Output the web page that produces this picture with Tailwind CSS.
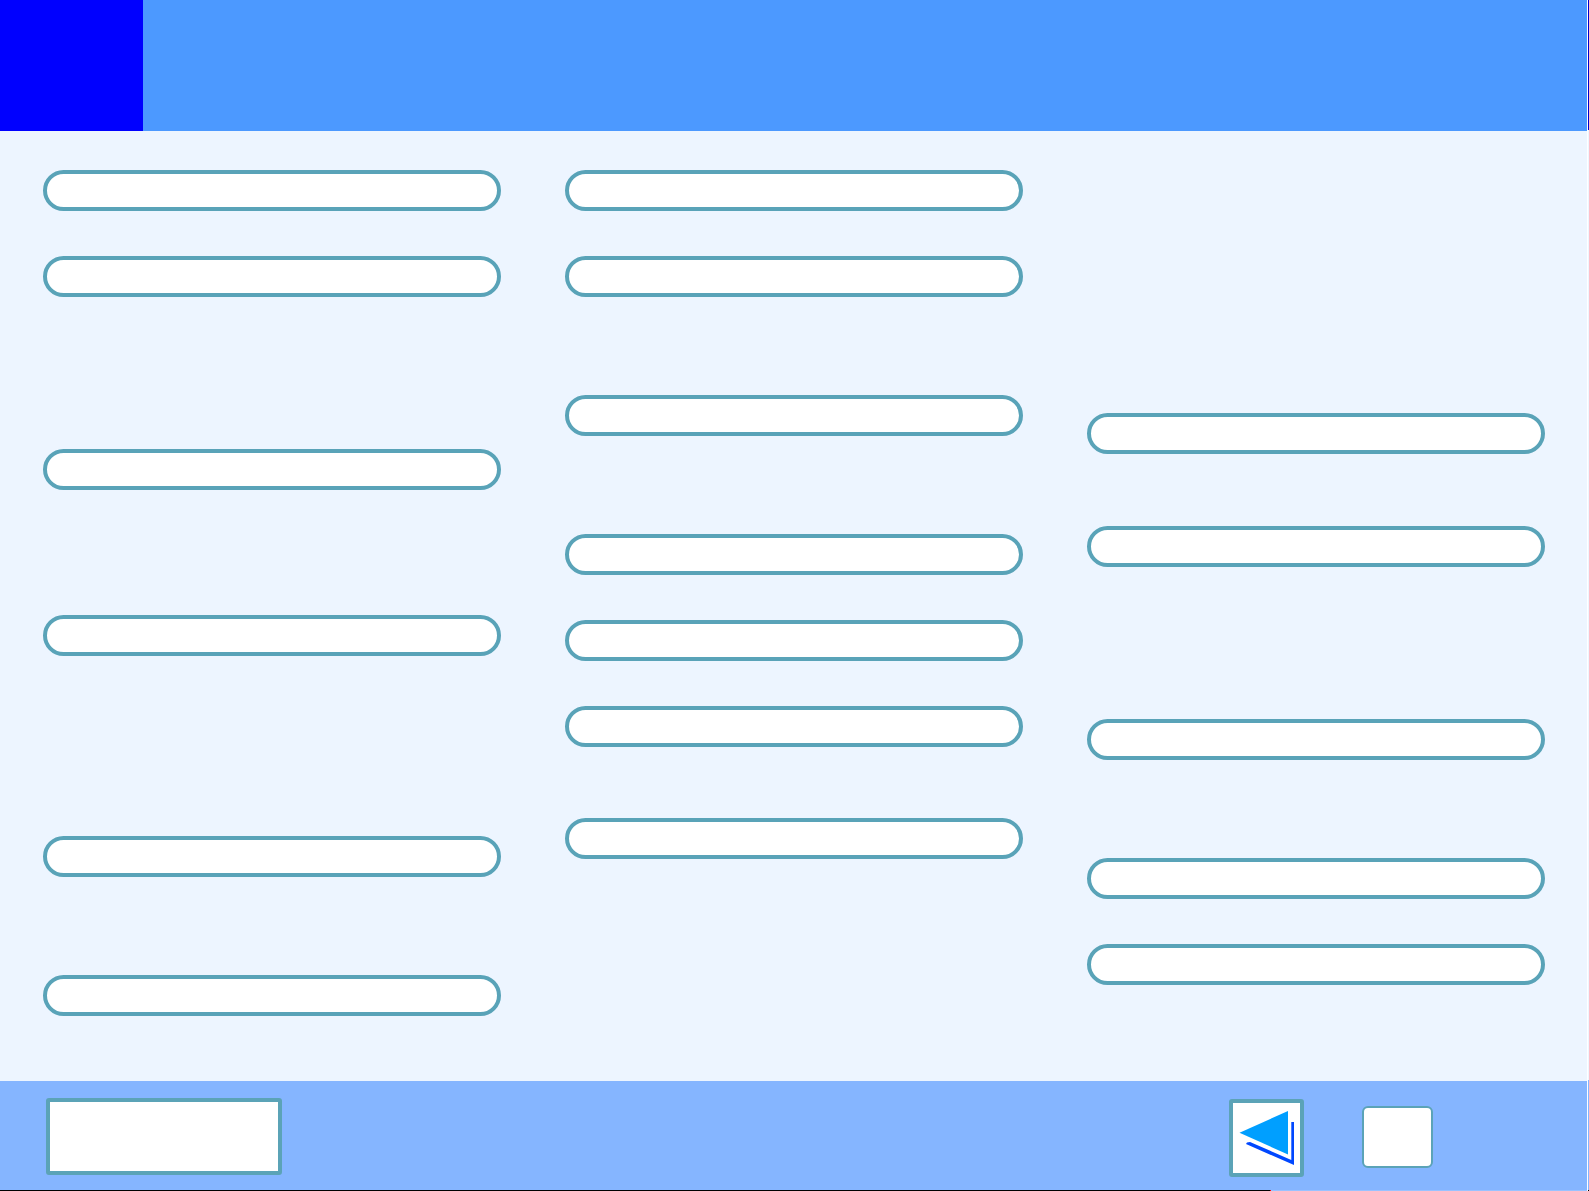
<!DOCTYPE html>
<html lang="en">
<head>
    <meta charset="UTF-8">
    <meta name="viewport" content="width=device-width, initial-scale=1.0">
    <title>Menu</title>
    <script src="https://cdn.jsdelivr.net/npm/@tailwindcss/browser@4"></script>
</head>
<body class="min-h-screen flex bg-white font-['Liberation_Sans',sans-serif]">
    <div class="flex-1 min-h-screen flex flex-col bg-[#edf5ff]">
        <header class="flex h-[131px] bg-[#4c99ff]">
            <div class="w-[143px] bg-[#0000ff]"></div>
        </header>

        <!-- Three columns of menu entries -->
        <main class="flex-1 grid grid-cols-3 gap-x-16 content-start pt-[39px] pl-[43px] pr-[42px]">
            <nav aria-label="Left column">
                <a href="#" class="block h-[41px] rounded-full border-4 border-[#59a3b8] bg-white"></a>
                <a href="#" class="block h-[41px] mt-[45px] rounded-full border-4 border-[#59a3b8] bg-white"></a>
                <a href="#" class="block h-[41px] mt-[152px] rounded-full border-4 border-[#59a3b8] bg-white"></a>
                <a href="#" class="block h-[41px] mt-[125px] rounded-full border-4 border-[#59a3b8] bg-white"></a>
                <a href="#" class="block h-[41px] mt-[180px] rounded-full border-4 border-[#59a3b8] bg-white"></a>
                <a href="#" class="block h-[41px] mt-[98px] rounded-full border-4 border-[#59a3b8] bg-white"></a>
            </nav>
            <nav aria-label="Middle column">
                <a href="#" class="block h-[41px] rounded-full border-4 border-[#59a3b8] bg-white"></a>
                <a href="#" class="block h-[41px] mt-[45px] rounded-full border-4 border-[#59a3b8] bg-white"></a>
                <a href="#" class="block h-[41px] mt-[98px] rounded-full border-4 border-[#59a3b8] bg-white"></a>
                <a href="#" class="block h-[41px] mt-[98px] rounded-full border-4 border-[#59a3b8] bg-white"></a>
                <a href="#" class="block h-[41px] mt-[45px] rounded-full border-4 border-[#59a3b8] bg-white"></a>
                <a href="#" class="block h-[41px] mt-[45px] rounded-full border-4 border-[#59a3b8] bg-white"></a>
                <a href="#" class="block h-[41px] mt-[71px] rounded-full border-4 border-[#59a3b8] bg-white"></a>
            </nav>
            <nav aria-label="Right column" class="pt-[243px]">
                <a href="#" class="block h-[41px] rounded-full border-4 border-[#59a3b8] bg-white"></a>
                <a href="#" class="block h-[41px] mt-[72px] rounded-full border-4 border-[#59a3b8] bg-white"></a>
                <a href="#" class="block h-[41px] mt-[152px] rounded-full border-4 border-[#59a3b8] bg-white"></a>
                <a href="#" class="block h-[41px] mt-[98px] rounded-full border-4 border-[#59a3b8] bg-white"></a>
                <a href="#" class="block h-[41px] mt-[45px] rounded-full border-4 border-[#59a3b8] bg-white"></a>
            </nav>
        </main>

        <footer class="flex items-start justify-between h-[109px] pt-[17px] pl-[46px] pr-[154px] bg-[#85b5ff]">
            <button type="button" aria-label="Contents" class="w-[236px] h-[77px] rounded-[3px] border-4 border-[#5ba3b7] bg-white"></button>
            <div class="flex items-start gap-[58px]">
                <button type="button" aria-label="Back" class="w-[75px] h-[78px] mt-px rounded-[3px] border-4 border-[#5ba3b7] bg-white">
                    <svg class="block w-[67px] h-[70px]" viewBox="0 0 67 70">
                        <polygon points="6.5,29.7 55,8 55,51.5" fill="#009fff" />
                        <polygon points="58.3,19 61,19 61,62 13,41 14,39.5 17,39 58.3,57" fill="#0047ff" />
                    </svg>
                </button>
                <button type="button" aria-label="Page" class="w-[71px] h-[62px] mt-2 rounded-md border-2 border-[#5ba3b7] bg-white"></button>
            </div>
        </footer>
        <div class="flex h-px bg-[#99c2ff]">
            <div class="w-4/5 bg-black"></div>
            <div class="w-px bg-[#ff0000]"></div>
        </div>
    </div>

    <!-- Thin strip along the right edge -->
    <div class="w-px bg-white"></div>
    <div class="w-px flex flex-col bg-[#edf5ff]">
        <div class="h-[130px] bg-[#0000cc]"></div>
        <div class="flex-1"></div>
        <div class="h-[110px] bg-[#85b5ff]"></div>
        <div class="h-px bg-black"></div>
    </div>
</body>
</html>
